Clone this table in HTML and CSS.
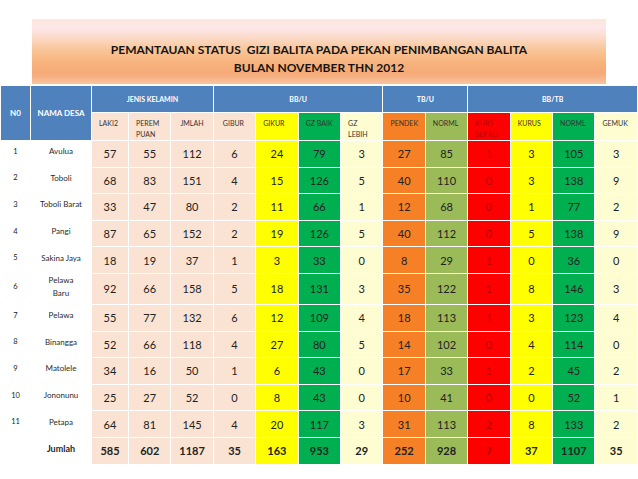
FILE: index.html
```html
<!DOCTYPE html>
<html>
<head>
<meta charset="utf-8">
<link rel="stylesheet" href="styles.css">
</head>
<body>
<div class="title">
  <p>PEMANTAUAN STATUS&nbsp; GIZI BALITA PADA PEKAN PENIMBANGAN BALITA</p>
  <p>BULAN NOVEMBER THN 2012</p>
</div>
<table class="gizi">
  <colgroup>
    <col class="w-no">
    <col class="w-name">
    <col class="w-laki peach">
    <col class="peach">
    <col class="peach">
    <col class="peach">
    <col class="yellow">
    <col class="green">
    <col class="cream">
    <col class="orange">
    <col class="olive">
    <col class="red">
    <col class="yellow">
    <col class="green">
    <col class="cream">
  </colgroup>
  <thead>
    <tr class="h1">
      <th rowspan="2" class="side">N0</th>
      <th rowspan="2" class="side">NAMA DESA</th>
      <th colspan="3" class="grp">JENIS KELAMIN</th>
      <th colspan="4" class="grp">BB/U</th>
      <th colspan="2" class="grp">TB/U</th>
      <th colspan="4" class="grp">BB/TB</th>
    </tr>
    <tr class="h2">
      <th>LAKI2</th>
      <th>PEREM<br>PUAN</th>
      <th class="wide">JMLAH</th>
      <th class="wide">GIBUR</th>
      <th>GIKUR</th>
      <th>GZ BAIK</th>
      <th>GZ<br>LEBIH</th>
      <th>PENDEK</th>
      <th>NORML</th>
      <th class="darkred">KURS<br>SEKALI</th>
      <th>KURUS</th>
      <th>NORML</th>
      <th>GEMUK</th>
    </tr>
  </thead>
  <tbody>
    <tr><td class="no">1</td><td class="name">Avulua</td><td>57</td><td>55</td><td>112</td><td>6</td><td>24</td><td>79</td><td>3</td><td>27</td><td>85</td><td>1</td><td>3</td><td>105</td><td>3</td></tr>
    <tr><td class="no">2</td><td class="name">Toboli</td><td>68</td><td>83</td><td>151</td><td>4</td><td>15</td><td>126</td><td>5</td><td>40</td><td>110</td><td>0</td><td>3</td><td>138</td><td>9</td></tr>
    <tr><td class="no">3</td><td class="name">Toboli Barat</td><td>33</td><td>47</td><td>80</td><td>2</td><td>11</td><td>66</td><td>1</td><td>12</td><td>68</td><td>0</td><td>1</td><td>77</td><td>2</td></tr>
    <tr><td class="no">4</td><td class="name">Pangi</td><td>87</td><td>65</td><td>152</td><td>2</td><td>19</td><td>126</td><td>5</td><td>40</td><td>112</td><td>0</td><td>5</td><td>138</td><td>9</td></tr>
    <tr><td class="no">5</td><td class="name">Sakina Jaya</td><td>18</td><td>19</td><td>37</td><td>1</td><td>3</td><td>33</td><td>0</td><td>8</td><td>29</td><td>1</td><td>0</td><td>36</td><td>0</td></tr>
    <tr class="tall"><td class="no">6</td><td class="name">Pelawa<br>Baru</td><td>92</td><td>66</td><td>158</td><td>5</td><td>18</td><td>131</td><td>3</td><td>35</td><td>122</td><td>1</td><td>8</td><td>146</td><td>3</td></tr>
    <tr><td class="no">7</td><td class="name">Pelawa</td><td>55</td><td>77</td><td>132</td><td>6</td><td>12</td><td>109</td><td>4</td><td>18</td><td>113</td><td>1</td><td>3</td><td>123</td><td>4</td></tr>
    <tr><td class="no">8</td><td class="name">Binangga</td><td>52</td><td>66</td><td>118</td><td>4</td><td>27</td><td>80</td><td>5</td><td>14</td><td>102</td><td>0</td><td>4</td><td>114</td><td>0</td></tr>
    <tr><td class="no">9</td><td class="name">Matolele</td><td>34</td><td>16</td><td>50</td><td>1</td><td>6</td><td>43</td><td>0</td><td>17</td><td>33</td><td>1</td><td>2</td><td>45</td><td>2</td></tr>
    <tr><td class="no">10</td><td class="name">Jononunu</td><td>25</td><td>27</td><td>52</td><td>0</td><td>8</td><td>43</td><td>0</td><td>10</td><td>41</td><td>0</td><td>0</td><td>52</td><td>1</td></tr>
    <tr><td class="no">11</td><td class="name">Petapa</td><td>64</td><td>81</td><td>145</td><td>4</td><td>20</td><td>117</td><td>3</td><td>31</td><td>113</td><td>2</td><td>8</td><td>133</td><td>2</td></tr>
    <tr class="total"><td class="no"></td><td class="name">Jumlah</td><td>585</td><td>602</td><td>1187</td><td>35</td><td>163</td><td>953</td><td>29</td><td>252</td><td>928</td><td>7</td><td>37</td><td>1107</td><td>35</td></tr>
  </tbody>
</table>
</body>
</html>
```

FILE: styles.css
```css
html, body {
  margin: 0;
  padding: 0;
  background: #ffffff;
}

body {
  font-family: Lato, "Liberation Sans", sans-serif;
  color: #222222;
}

.title {
  margin: 19px 32px 1px;
  height: 65px;
  box-sizing: border-box;
  padding-top: 22px;
  background: linear-gradient(to bottom,
    #fbe8da 0%,
    #fde6ea 14%,
    #fbd9c4 30%,
    #f9c596 48%,
    #f7b27c 68%,
    #f6aa78 84%,
    #f8c4a0 100%);
  text-align: center;
  font-weight: 700;
  font-size: 12px;
  line-height: 18px;
  color: #151515;
}

.title p {
  margin: 0;
}

.gizi {
  width: 638px;
  table-layout: fixed;
  border-collapse: collapse;
}

.gizi th,
.gizi td {
  border: 1px solid #ffffff;
  padding: 0;
}

.w-no { width: 30px; }
.w-name { width: 61px; }
.w-laki { width: 37px; }

.peach { background: #fae3d3; }
.yellow { background: #ffff00; }
.green { background: #00b050; }
.cream { background: #fefcd1; }
.orange { background: #f58025; }
.olive { background: #9bbb59; }
.red { background: #ff0000; }

.side {
  background: #4f81bd;
  color: #ffffff;
  font-size: 8px;
  font-weight: 700;
  vertical-align: middle;
  padding-top: 5px;
}

.h1 {
  height: 27px;
}

.grp {
  background: #4f81bd;
  color: #ffffff;
  font-size: 7px;
  font-weight: 700;
  vertical-align: middle;
  padding-top: 10px;
}

.h2 {
  height: 28px;
}

.h2 th {
  font-size: 7px;
  font-weight: 400;
  line-height: 11px;
  color: #333333;
  text-align: left;
  vertical-align: top;
  padding: 5px 2px 0 7px;
}

.h2 th.wide {
  padding-left: 9px;
}

.h2 th.darkred {
  color: #c00000;
}

.gizi tbody tr {
  height: 26.6px;
}

.gizi tbody tr.tall {
  height: 30px;
}

.gizi tbody td {
  text-align: center;
  vertical-align: middle;
  font-size: 11px;
  color: #222222;
}

.gizi tbody td:nth-child(12) {
  color: #b00000;
}

.gizi tbody td.no {
  font-size: 7.5px;
  padding-bottom: 5px;
}

.gizi tbody td.name {
  font-size: 8px;
  line-height: 13px;
  padding-bottom: 4px;
  color: #2a2a2a;
}

.gizi tbody tr.total td {
  font-weight: 700;
}

.gizi tbody tr.total td.name {
  font-size: 9px;
}
```
